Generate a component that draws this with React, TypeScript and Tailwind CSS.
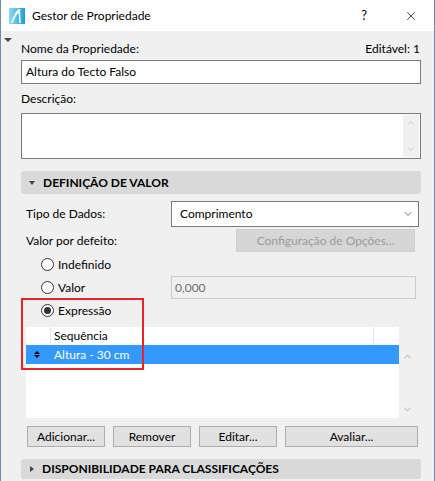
import { ChevronDown, ChevronUp, X } from 'lucide-react';

const font = { fontFamily: 'Lato, "Noto Sans", sans-serif' };

function Radio({ checked, label }: { checked?: boolean; label: string }) {
  return (
    <div className="flex items-center gap-[4px]">
      <span className="w-[13px] h-[13px] rounded-full border border-[#333333] bg-white flex items-center justify-center">
        {checked && <span className="w-[7px] h-[7px] rounded-full bg-[#333333]" />}
      </span>
      <span>{label}</span>
    </div>
  );
}

function Btn({ label, className }: { label: string; className: string }) {
  return (
    <div className={`h-[21px] bg-[#e1e1e1] border border-[#adadad] flex items-center justify-center ${className}`}>
      {label}
    </div>
  );
}

export default function App() {
  return (
    <div
      className="w-[435px] h-[481px] flex flex-col border-x border-[#6a8db3] bg-[#f0f0f0] text-[12px] text-black overflow-hidden relative"
      style={font}
    >
      {/* Title bar */}
      <div className="h-[31px] bg-white flex items-center shrink-0">
        <svg className="ml-[8px]" width="16" height="16" viewBox="0 0 16 16">
          <defs>
            <linearGradient id="lg" x1="0" y1="0" x2="1" y2="0">
              <stop offset="0" stopColor="#8adaf5" />
              <stop offset="1" stopColor="#1e9fd9" />
            </linearGradient>
          </defs>
          <rect x="0" y="0" width="16" height="16" fill="url(#lg)" />
          <path d="M2 15 C4 9 7 3 9.5 1 L11 1 L11.8 15 L10.2 15 L9.6 4.5 C7 7 5 11 3.8 15 Z" fill="#ffffff" />
        </svg>
        <span className="ml-[7px] text-[12px]">Gestor de Propriedade</span>
        <span className="ml-auto mr-[37px] text-[13px]">?</span>
        <X className="mr-[16px] w-[14px] h-[14px]" strokeWidth={1.2} />
      </div>

      {/* Collapse marker */}
      <div className="absolute left-[3px] top-[38px] w-0 h-0 border-l-[4px] border-r-[4px] border-t-[4px] border-l-transparent border-r-transparent border-t-[#444444]" />

      <div className="flex flex-col pl-[20px] pr-[13px] pt-[10px]">
        <div className="flex items-center justify-between h-[16px]">
          <span>Nome da Propriedade:</span>
          <span className="mr-[1px]">Editável: 1</span>
        </div>
        <div className="mt-[3px] h-[24px] bg-white border border-[#7a7a7a] flex items-center px-[4px]">
          Altura do Tecto Falso
        </div>
        <div className="mt-[7px] h-[16px] flex items-center">Descrição:</div>
        <div className="mt-[6px] h-[46px] bg-white border border-[#7a7a7a] flex justify-end p-[1px]">
          <div className="w-[16px] bg-[#f0f0f0] flex flex-col items-center justify-between py-[3px] text-[#c2c2c2]">
            <ChevronUp className="w-[10px] h-[10px]" strokeWidth={2} />
            <ChevronDown className="w-[10px] h-[10px]" strokeWidth={2} />
          </div>
        </div>

        {/* Section header */}
        <div className="mt-[12px] h-[23px] rounded-[3px] bg-[#d9d9d9] flex items-center">
          <span className="ml-[8px] w-0 h-0 border-l-[3px] border-r-[3px] border-t-[4px] border-l-transparent border-r-transparent border-t-[#444444]" />
          <span className="ml-[8px] font-bold">DEFINIÇÃO DE VALOR</span>
        </div>

        <div className="mt-[7px] flex items-center h-[26px]">
          <span className="ml-[5px] w-[145px]">Tipo de Dados:</span>
          <div className="w-[248px] h-[26px] bg-white border border-[#7a7a7a] flex items-center pl-[8px] pr-[4px]">
            <span className="flex-1">Comprimento</span>
            <ChevronDown className="w-[12px] h-[12px] text-[#444444]" strokeWidth={1.5} />
          </div>
        </div>

        <div className="mt-[2px] flex items-center h-[23px]">
          <span className="ml-[5px] flex-1">Valor por defeito:</span>
          <div className="mr-[6px] w-[179px] h-[23px] bg-[#d6d6d6] border border-[#cfcfcf] text-[#9b9b9b] flex items-center justify-center">
            Configuração de Opções...
          </div>
        </div>

        <div className="mt-[1px] ml-[20px] h-[23px] flex items-center">
          <Radio label="Indefinido" />
        </div>
        <div className="ml-[20px] h-[23px] flex items-center">
          <div className="w-[130px]">
            <Radio label="Valor" />
          </div>
          <div className="w-[245px] h-[23px] border border-[#cccccc] bg-[#f0f0f0] text-[#6d6d6d] flex items-center pl-[3px]">
            0,000
          </div>
        </div>
        <div className="ml-[20px] h-[23px] flex items-center">
          <Radio checked label="Expressão" />
        </div>

        {/* Table */}
        <div className="mt-[5px] ml-[5px] flex h-[91px]">
          <div className="w-[373px] bg-white flex flex-col">
            <div className="h-[18px] flex">
              <div className="w-[25px] border-r border-[#e5e5e5]" />
              <div className="w-[323px] pl-[3px] flex items-center border-r border-[#e5e5e5]">Sequência</div>
            </div>
            <div className="h-[19px] bg-[#3399ff] text-white flex items-center">
              <span className="w-[25px] flex flex-col items-center justify-center gap-[1px] ml-[-2px]">
                <span className="w-0 h-0 border-l-[3px] border-r-[3px] border-b-[3px] border-l-transparent border-r-transparent border-b-black" />
                <span className="w-0 h-0 border-l-[3px] border-r-[3px] border-t-[3px] border-l-transparent border-r-transparent border-t-black" />
              </span>
              <span className="pl-[5px]">Altura - 30 cm</span>
            </div>
          </div>
          <div className="w-[17px] flex flex-col items-center justify-between pt-[24px] pb-[3px] text-[#c2c2c2]">
            <ChevronUp className="w-[11px] h-[11px]" strokeWidth={2.5} />
            <ChevronDown className="w-[11px] h-[11px]" strokeWidth={2.5} />
          </div>
        </div>

        {/* Buttons */}
        <div className="mt-[8px] ml-[6px] flex gap-[8px]">
          <Btn label="Adicionar..." className="w-[78px]" />
          <Btn label="Remover" className="w-[78px]" />
          <Btn label="Editar..." className="w-[78px]" />
          <Btn label="Avaliar..." className="w-[133px]" />
        </div>

        {/* Second section header */}
        <div className="mt-[12px] h-[20px] rounded-[3px] bg-[#d9d9d9] flex items-center">
          <span className="ml-[9px] w-0 h-0 border-t-[3px] border-b-[3px] border-l-[4px] border-t-transparent border-b-transparent border-l-[#444444]" />
          <span className="ml-[8px] font-bold">DISPONIBILIDADE PARA CLASSIFICAÇÕES</span>
        </div>
      </div>

      {/* Highlight box */}
      <div className="absolute left-[20px] top-[298px] w-[123px] h-[72px] border-2 border-[#e8232a]" />
    </div>
  );
}
